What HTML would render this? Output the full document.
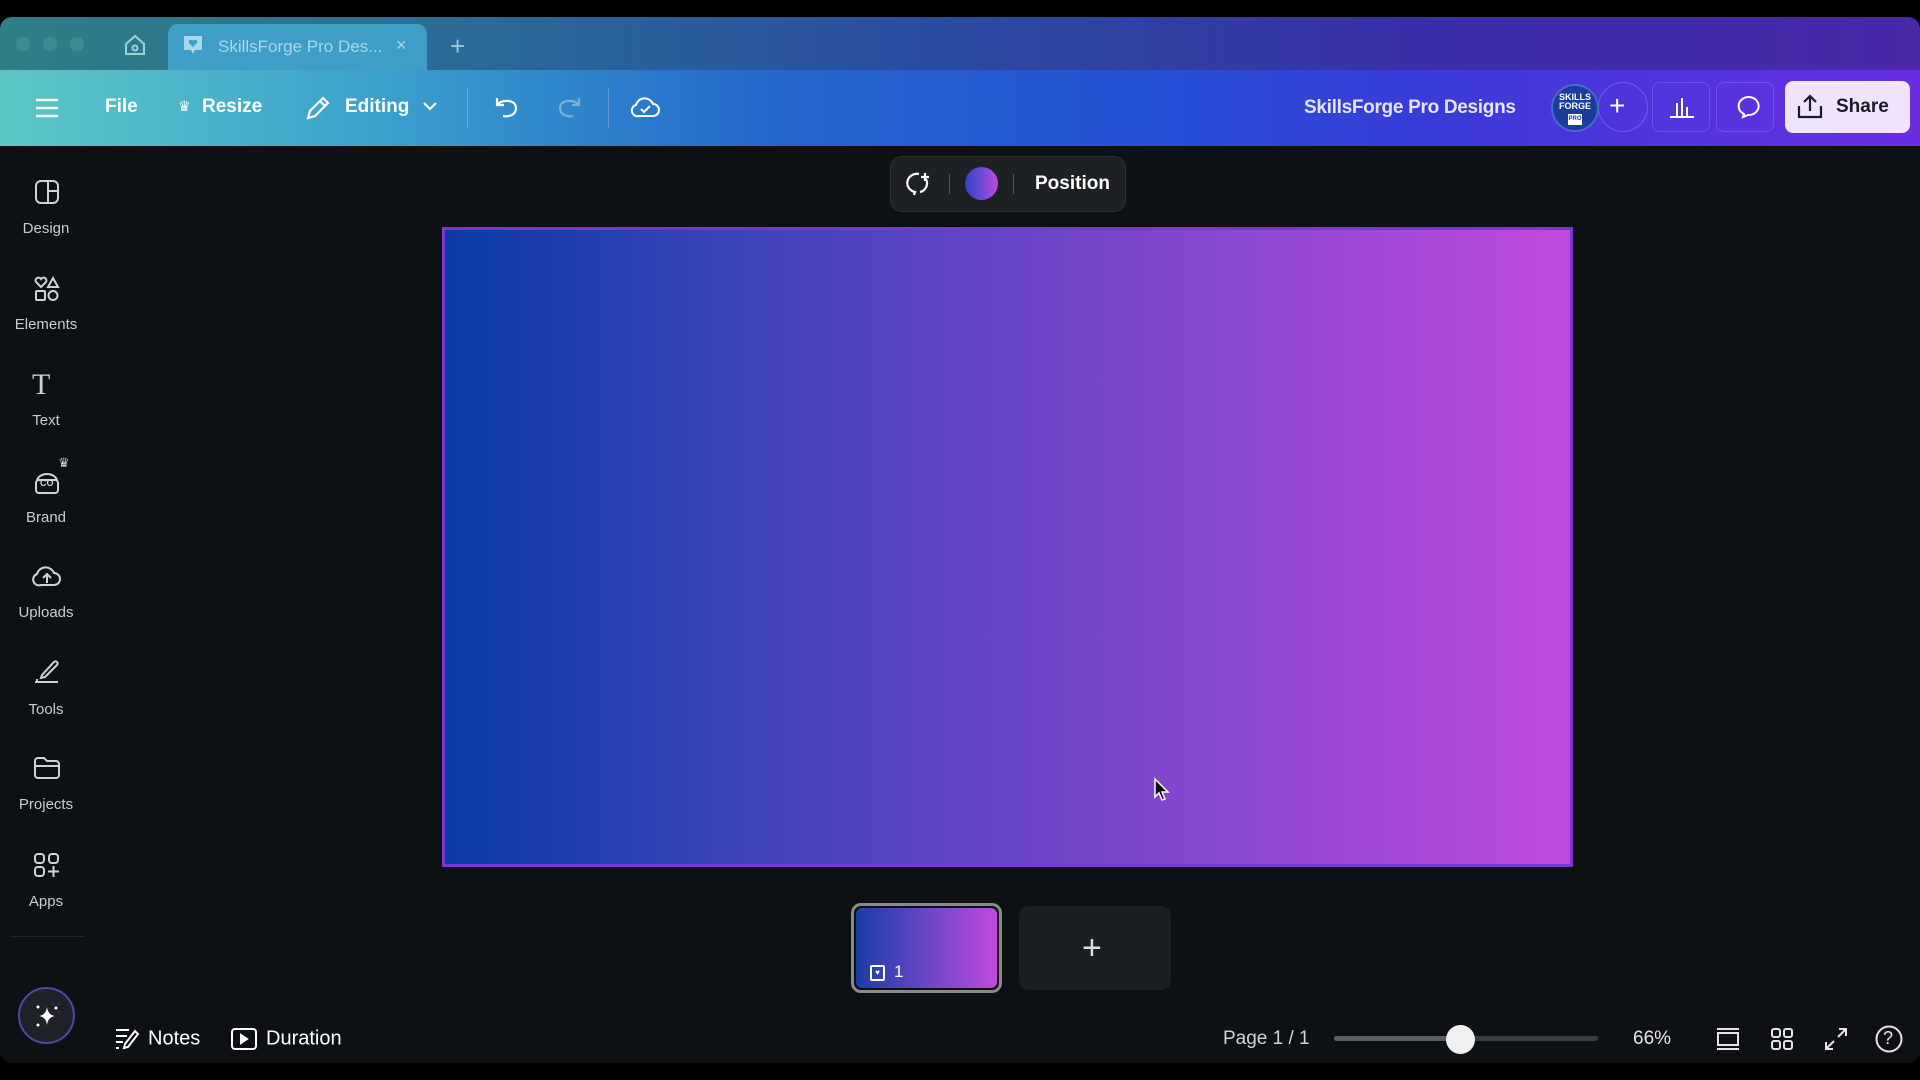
<!DOCTYPE html>
<html><head><meta charset="utf-8"><style>
*{margin:0;padding:0;box-sizing:border-box}
body{width:1920px;height:1080px;background:#000;position:relative;overflow:hidden;font-family:"Liberation Sans",sans-serif;color:#fff}
.abs{position:absolute}
.tabbar{left:0;top:17px;width:1920px;height:54px;background:linear-gradient(90deg,#2e7f86 0%,#2a6a98 25%,#2a4aa0 50%,#3a2ea8 75%,#4a28a8 100%);border-radius:12px 12px 0 0}
.toolbar{left:0;top:70px;width:1920px;height:76px;background:linear-gradient(90deg,#5cc8c6 0%,#3aa0cc 20%,#2468cc 40%,#2450d6 60%,#3a3ad8 75%,#6a2ee0 100%)}
.main{left:0;top:146px;width:1920px;height:917px;background:#0e1114;border-radius:0 0 12px 12px}
.tab{left:168px;top:24px;width:259px;height:47px;background:#3e9ec6;border-radius:10px 10px 0 0}
.t{font-size:19px;font-weight:bold;color:#fff;transform:translateY(-50%)}
svg{position:absolute;overflow:visible}
.lab{font-size:15px;color:#c8ccd0;width:92px;text-align:center;left:0}
</style></head><body>
<div class="abs tabbar"></div>
<div class="abs" style="left:16px;top:37px;width:14px;height:14px;border-radius:50%;background:#3d8c90"></div>
<div class="abs" style="left:43px;top:37px;width:14px;height:14px;border-radius:50%;background:#3d8c90"></div>
<div class="abs" style="left:70px;top:37px;width:14px;height:14px;border-radius:50%;background:#3d8c90"></div>
<svg style="left:124px;top:34px" width="22" height="22" viewBox="0 0 22 22" fill="none" stroke="#9fd0d8" stroke-width="2"><path d="M2 10 L11 2 L20 10 V20 H2Z"/><circle cx="11" cy="14" r="2.5"/></svg>
<div class="abs tab"></div>
<svg style="left:182px;top:34px" width="22" height="22" viewBox="0 0 22 22"><path d="M2 2 H20 V16 H13 L11 20 L9 16 H2Z" fill="#a8d8ec"/><path d="M11 13 L7 9 A2 2 0 0 1 11 7 A2 2 0 0 1 15 9Z" fill="#3e9ec6"/></svg>
<div class="abs" style="left:218px;top:37px;font-size:17px;color:#a8d8ec">SkillsForge Pro Des...</div>
<div class="abs" style="left:396px;top:35px;font-size:18px;color:#a8d8ec">×</div>
<div class="abs" style="left:450px;top:31px;font-size:26px;color:#9fc8dc">+</div>

<div class="abs toolbar"></div>
<svg style="left:36px;top:98px" width="22" height="20" stroke="#fff" stroke-width="2.5"><path d="M0 2H22M0 10H22M0 18H22"/></svg>
<div class="abs t" style="left:105px;top:107px">File</div>
<div class="abs" style="left:178px;top:98px;font-size:14px">♛</div>
<div class="abs t" style="left:202px;top:107px">Resize</div>
<svg style="left:305px;top:95px" width="26" height="26" viewBox="0 0 26 26" fill="none" stroke="#fff" stroke-width="2.2"><path d="M3 23 L5 16 L18 3 L23 8 L10 21Z M15 6 L20 11"/></svg>
<div class="abs t" style="left:345px;top:107px">Editing</div>
<svg style="left:423px;top:102px" width="14" height="9" fill="none" stroke="#fff" stroke-width="2.2"><path d="M1 1 L7 7 L13 1"/></svg>
<div class="abs" style="left:467px;top:88px;width:1px;height:40px;background:rgba(255,255,255,.25)"></div>
<svg style="left:494px;top:95px" width="26" height="24" fill="none" stroke="#fff" stroke-width="2.2"><path d="M3 3 V10 H10 M3 10 C7 4 22 4 22 13 C22 20 15 22 9 21"/></svg>
<svg style="left:556px;top:95px" width="26" height="24" fill="none" stroke="rgba(255,255,255,.35)" stroke-width="2.2"><path d="M23 3 V10 H16 M23 10 C19 4 4 4 4 13 C4 20 11 22 17 21"/></svg>
<div class="abs" style="left:608px;top:88px;width:1px;height:40px;background:rgba(255,255,255,.25)"></div>
<svg style="left:631px;top:95px" width="30" height="24" fill="none" stroke="#fff" stroke-width="2"><path d="M8 21 H22 A6 6 0 0 0 22 9 A9 9 0 0 0 5 10 A5.5 5.5 0 0 0 8 21Z M10 14 L13 17 L19 11"/></svg>

<div class="abs t" style="left:1304px;top:108px;color:#e4e4f4;letter-spacing:-0.3px">SkillsForge Pro Designs</div>
<div class="abs" style="left:1598px;top:82px;width:50px;height:50px;border-radius:50%;border:1px solid rgba(255,255,255,.2)"></div>
<div class="abs" style="left:1551px;top:84px;width:48px;height:48px;border-radius:50%;background:#1a3c9c;border:2px solid #4a66d0;font-size:9px;font-weight:bold;text-align:center;line-height:9px;padding-top:7px">SKILLS<br>FORGE<div style="margin:3px auto 0;width:14px;height:11px;background:#fff;color:#1a3c9c;font-size:6px;line-height:11px">PRO</div></div>
<div class="abs" style="left:1609px;top:90px;font-size:28px;line-height:32px">+</div>
<div class="abs" style="left:1652px;top:82px;width:58px;height:50px;border-radius:8px;border:1px solid rgba(255,255,255,.15)"></div>
<svg style="left:1670px;top:96px" width="24" height="22" stroke="#fff" stroke-width="2"><path d="M0 21H24M7 20V7M12 20V2M17 20V11"/></svg>
<div class="abs" style="left:1716px;top:82px;width:58px;height:50px;border-radius:8px;border:1px solid rgba(255,255,255,.15)"></div>
<svg style="left:1733px;top:95px" width="26" height="26" fill="none" stroke="#fff" stroke-width="2"><path d="M10 22 L11 19 A10 9 0 1 1 15 20 Z"/></svg>
<div class="abs" style="left:1785px;top:81px;width:125px;height:52px;border-radius:8px;background:#efe4fa"></div>
<svg style="left:1797px;top:94px" width="26" height="26" fill="none" stroke="#1a1a2a" stroke-width="2.2"><path d="M2 12 V23 H24 V12 M13 17 V2 M7 8 L13 2 L19 8"/></svg>
<div class="abs t" style="left:1836px;top:107px;color:#1a1a2a">Share</div>

<div class="abs main"></div>
<svg style="left:35px;top:180px" width="24" height="24" fill="none" stroke="#cfd3d6" stroke-width="2"><rect x="1" y="1" width="22" height="22" rx="5"/><path d="M13 1V23M13 11H23"/></svg>
<div class="abs lab" style="top:220px">Design</div>
<svg style="left:35px;top:277px" width="24" height="24" fill="none" stroke="#cfd3d6" stroke-width="2"><path d="M6 10 L1 5 A2.5 2.5 0 0 1 6 2 A2.5 2.5 0 0 1 11 5Z M18 1 L23 10 H13Z"/><rect x="1" y="14" width="9" height="9" rx="1"/><circle cx="18" cy="18.5" r="4.5"/></svg>
<div class="abs lab" style="top:316px">Elements</div>
<div class="abs" style="left:32px;top:368px;font-family:'Liberation Serif',serif;font-size:30px;color:#cfd3d6">T</div>
<div class="abs lab" style="top:412px">Text</div>
<svg style="left:34px;top:470px" width="26" height="24" fill="none" stroke="#cfd3d6" stroke-width="2"><path d="M3 10 C6 2 20 2 23 10"/><rect x="2" y="10" width="22" height="13" rx="3"/></svg>
<div class="abs" style="left:40px;top:478px;font-size:9px;color:#cfd3d6;font-weight:bold">CO</div>
<div class="abs" style="left:58px;top:455px;font-size:13px;color:#cfd3d6">♛</div>
<div class="abs lab" style="top:509px">Brand</div>
<svg style="left:33px;top:564px" width="28" height="22" fill="none" stroke="#cfd3d6" stroke-width="2"><path d="M8 21 H21 A6 6 0 0 0 21 9 A9 9 0 0 0 4 10 A5.5 5.5 0 0 0 8 21Z M14 19 V11 M10 14 L14 10 L18 14"/></svg>
<div class="abs lab" style="top:604px">Uploads</div>
<svg style="left:34px;top:659px" width="26" height="24" fill="none" stroke="#cfd3d6" stroke-width="2"><path d="M8 16 L20 3 A2 2 0 0 1 23 6 L11 18 L7 19Z M1 23 H24 M3 20 V23"/></svg>
<div class="abs lab" style="top:701px">Tools</div>
<svg style="left:34px;top:757px" width="26" height="22" fill="none" stroke="#cfd3d6" stroke-width="2"><path d="M1 4 A3 3 0 0 1 4 1 H10 L13 4 H22 A3 3 0 0 1 25 7 V18 A3 3 0 0 1 22 21 H4 A3 3 0 0 1 1 18Z M1 9 H25"/></svg>
<div class="abs lab" style="top:796px">Projects</div>
<svg style="left:34px;top:853px" width="26" height="24" fill="none" stroke="#cfd3d6" stroke-width="2"><rect x="1" y="1" width="9" height="9" rx="3"/><rect x="15" y="1" width="9" height="9" rx="3"/><rect x="1" y="14" width="9" height="9" rx="3"/><path d="M19.5 13 V24 M14 18.5 H25"/></svg>
<div class="abs lab" style="top:893px">Apps</div>
<div class="abs" style="left:10px;top:936px;width:75px;height:1px;background:#20252a"></div>
<div class="abs" style="left:18px;top:987px;width:57px;height:57px;border-radius:50%;background:#1e2228;border:2px solid #4a4aa8"></div>
<svg style="left:33px;top:1002px" width="28" height="28" fill="#fff"><path d="M14 5 Q15 13 22 14 Q15 15 14 23 Q13 15 6 14 Q13 13 14 5Z"/><circle cx="5" cy="5" r="1.5"/><circle cx="23" cy="6" r="1.5"/><circle cx="5" cy="23" r="1.5"/></svg>

<div class="abs" style="left:890px;top:156px;width:236px;height:56px;border-radius:12px;background:#1e2124;border:1px solid #2c3034"></div>
<svg style="left:903px;top:171px" width="30" height="28" fill="none" stroke="#fff" stroke-width="2.2"><path d="M11 24 L12 21 A9.5 9 0 0 1 16 3 M23 8 A9 9 0 0 1 17 21 M22 2 V10 M18 6 H26"/></svg>
<div class="abs" style="left:949px;top:174px;width:1px;height:20px;background:#555"></div>
<div class="abs" style="left:965px;top:167px;width:33px;height:33px;border-radius:50%;background:linear-gradient(90deg,#2a44c8,#b84ce0)"></div>
<div class="abs" style="left:1013px;top:174px;width:1px;height:20px;background:#555"></div>
<div class="abs t" style="left:1035px;top:184px;font-size:19px">Position</div>

<div class="abs" style="left:442px;top:227px;width:1131px;height:640px;border:3px solid #7a36d4;background:linear-gradient(90deg,#0a3aa6 0%,#3a44b8 25%,#6044c4 45%,#8a48d0 70%,#c04ade 100%)"></div>
<svg style="left:1154px;top:778px" width="16" height="24"><path d="M1 1 V19 L5 15 L8 22 L11 21 L8 14 H14Z" fill="#111" stroke="#fff" stroke-width="1.5"/></svg>

<div class="abs" style="left:851px;top:903px;width:151px;height:90px;border-radius:10px;border:3px solid #8a8a8a;padding:2px;background:#0e1114"><div style="width:100%;height:100%;border-radius:6px;background:linear-gradient(90deg,#1a3ca8,#6a46c6 50%,#c04ade)"></div></div>
<div class="abs" style="left:870px;top:965px;width:15px;height:16px;border:2px solid #fff;border-radius:2px;font-size:8px;line-height:12px;text-align:center">♥</div>
<div class="abs" style="left:894px;top:962px;font-size:17px">1</div>
<div class="abs" style="left:1019px;top:906px;width:152px;height:84px;border-radius:10px;background:#1c1f22"></div>
<div class="abs" style="left:1082px;top:928px;font-size:34px;line-height:40px;color:#ddd">+</div>

<svg style="left:115px;top:1028px" width="26" height="22" fill="none" stroke="#fff" stroke-width="2"><path d="M1 2 H14 M1 8 H12 M1 14 H8 M1 20 H4 M9 20 L10 16 L20 3 L23 6 L13 19Z"/></svg>
<div class="abs t" style="left:148px;top:1039px;font-weight:normal;font-size:20px">Notes</div>
<svg style="left:231px;top:1028px" width="26" height="22" fill="none" stroke="#fff" stroke-width="2"><rect x="1" y="1" width="24" height="20" rx="3"/><path d="M10 7 L16 11 L10 15Z" fill="#fff"/></svg>
<div class="abs t" style="left:266px;top:1039px;font-weight:normal;font-size:20px">Duration</div>
<div class="abs t" style="left:1223px;top:1039px;font-weight:normal;font-size:19px;color:#cfd3d6">Page 1 / 1</div>
<div class="abs" style="left:1334px;top:1036px;width:264px;height:5px;border-radius:3px;background:#3a3e42"></div>
<div class="abs" style="left:1334px;top:1036px;width:127px;height:5px;border-radius:3px;background:#5a5e62"></div>
<div class="abs" style="left:1446px;top:1025px;width:29px;height:29px;border-radius:50%;background:#f0f0f0"></div>
<div class="abs t" style="left:1633px;top:1039px;font-weight:normal;font-size:19px;color:#e4e4e4">66%</div>
<svg style="left:1717px;top:1028px" width="22" height="22" fill="none" stroke="#e4e4e4" stroke-width="2"><path d="M0 1 H22 M0 21 H22"/><rect x="1" y="5" width="20" height="12"/></svg>
<svg style="left:1771px;top:1028px" width="22" height="22" fill="none" stroke="#e4e4e4" stroke-width="2"><rect x="1" y="1" width="8" height="8" rx="2"/><rect x="13" y="1" width="8" height="8" rx="2"/><rect x="1" y="13" width="8" height="8" rx="2"/><rect x="13" y="13" width="8" height="8" rx="2"/></svg>
<svg style="left:1825px;top:1028px" width="22" height="22" fill="none" stroke="#e4e4e4" stroke-width="2"><path d="M13 9 L21 1 M14 1 H21 V8 M9 13 L1 21 M1 14 V21 H8"/></svg>
<svg style="left:1875px;top:1025px" width="28" height="28" fill="none" stroke="#e4e4e4" stroke-width="2"><circle cx="14" cy="14" r="12.5"/></svg>
<div class="abs" style="left:1883px;top:1028px;font-size:18px;color:#e4e4e4">?</div>
</body></html>
